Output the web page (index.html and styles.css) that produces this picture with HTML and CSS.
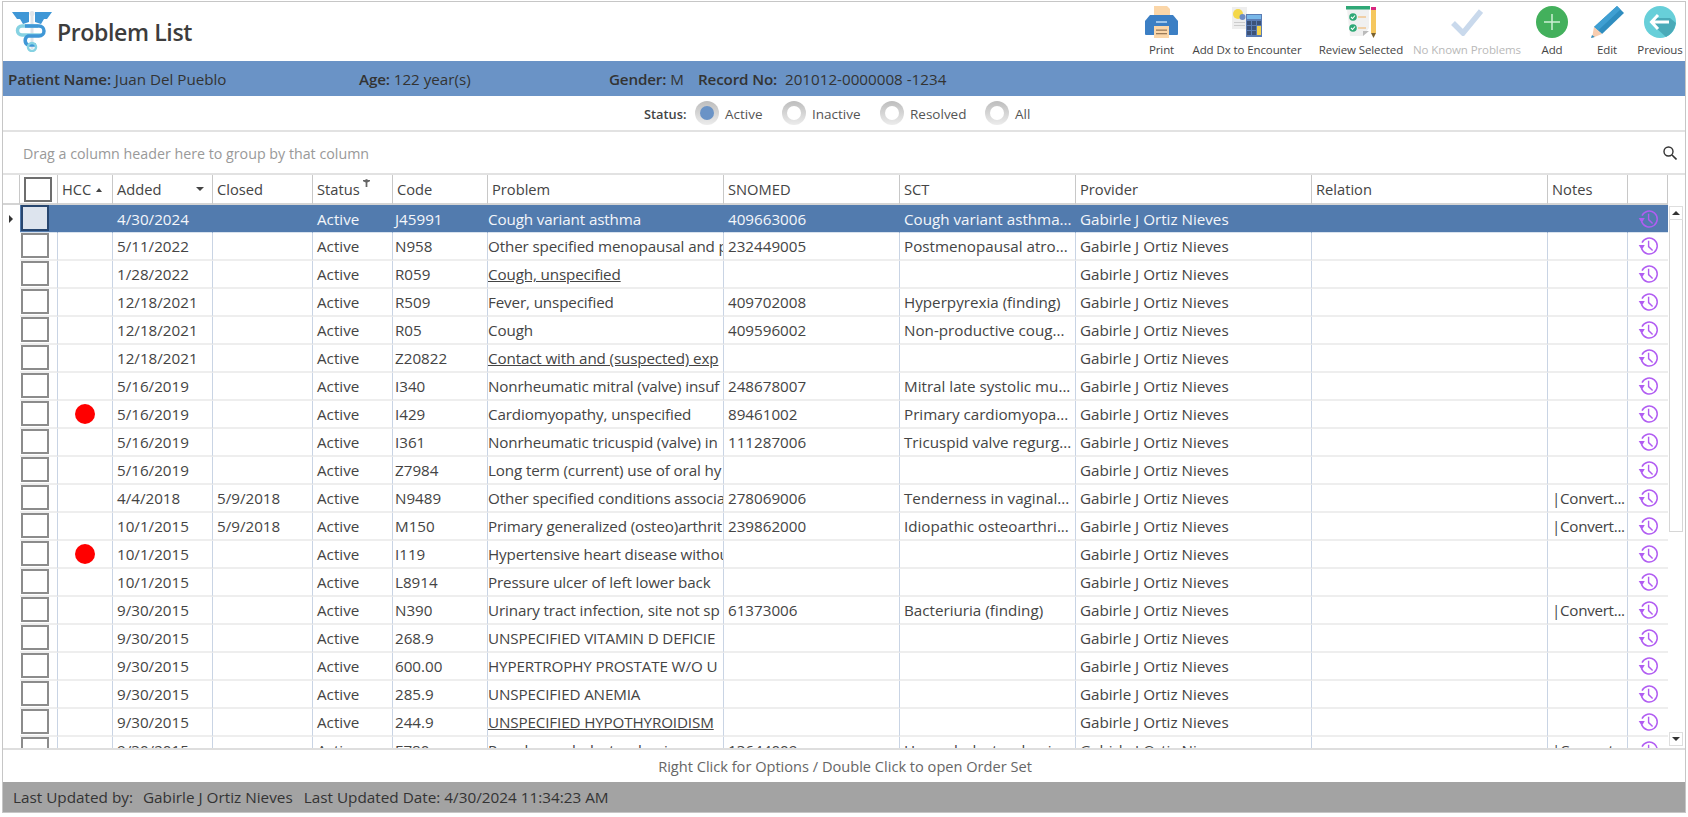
FILE: index.html
```html
<!DOCTYPE html>
<html lang="en">
<head>
<meta charset="utf-8">
<title>Problem List</title>
<link rel="stylesheet" href="styles.css">
</head>
<body>
<svg class="defs" aria-hidden="true">
  <symbol id="hist" viewBox="0 0 20 20">
    <path d="M3.2 12.6A8 8 0 1 0 3.4 6.2" transform="translate(.6 .4)" fill="none" stroke="currentColor" stroke-width="1.5"/>
    <path d="M1 8.6 L7 9.4 L3.4 14 Z" fill="currentColor" transform="rotate(-8 4 11)"/>
    <path d="M10.6 4.8V10.6L14.6 14.4" fill="none" stroke="currentColor" stroke-width="1.4"/>
  </symbol>
</svg>
<div class="frame">
  <header class="top">
    <svg class="logo" viewBox="0 0 40 41">
      <path d="M0 1H17V11L11 13 8 8 5 8Z" fill="#3f97d6"/>
      <path d="M40 1H23V11L29 13 32 8 35 8Z" fill="#3f97d6"/>
      <rect x="18.5" y="2" width="3" height="36" fill="#dfe5ea"/>
      <circle cx="20" cy="2.5" r="2.5" fill="#dfe5ea"/>
      <path d="M26 14H10a4 4 0 0 0 0 9H30" fill="none" stroke="#86d2e2" stroke-width="3.5" transform="translate(0 1)"/>
      <path d="M13 15H27a5 5 0 0 1 0 10H16a5 5 0 0 0 0 9H24" fill="none" stroke="#3f97d6" stroke-width="3.5"/>
      <circle cx="20" cy="36" r="4" fill="none" stroke="#86d2e2" stroke-width="2.5"/>
    </svg>
    <h1 class="title">Problem List</h1>
    <nav class="tools">
      <div class="tool t-print">
        <svg class="ticon" viewBox="0 0 33 32"><path d="M9 0H22L25 3V12H9Z" fill="#fbd6a8"/><path d="M5 9H28L33 15V28Q33 29 32 29H1Q0 29 0 28V15Z" fill="#3c7fc4"/><rect x="11" y="15" width="11" height="2" fill="#9cc4ea"/><rect x="9" y="20" width="15" height="12" fill="#fbd6a8"/><rect x="11" y="23.500" width="11" height="1.300" fill="#9b7a58"/><rect x="11" y="27" width="11" height="1.300" fill="#9b7a58"/></svg>
        <span class="tlabel">Print</span>
      </div>
      <div class="tool t-dx">
        <svg class="ticon" viewBox="0 0 30 30"><rect width="15" height="22" fill="#eeeeee"/><circle cx="6" cy="7" r="5" fill="#f4d84a"/><circle cx="10.500" cy="10" r="3" fill="#6d8cc4"/><rect x="2" y="15" width="11" height="1" fill="#ccc"/><rect x="2" y="18" width="11" height="1" fill="#ccc"/><rect x="14" y="7" width="16" height="23" fill="#5b7cb4"/><rect x="15" y="8" width="14" height="4" fill="#78b7e8"/><g fill="#3d5278"><rect x="15" y="14" width="4" height="4"/><rect x="20" y="14" width="4" height="4"/><rect x="25" y="14" width="4" height="4"/><rect x="15" y="19" width="4" height="4"/><rect x="20" y="19" width="4" height="4"/><rect x="15" y="24" width="4" height="4"/><rect x="20" y="24" width="4" height="4"/></g><rect x="25" y="19" width="4" height="9" fill="#f5d24a"/></svg>
        <span class="tlabel">Add Dx to Encounter</span>
      </div>
      <div class="tool t-review">
        <svg class="ticon" viewBox="0 0 30 32"><path d="M1 3H23V22L17 30H4Z" fill="#f0f0f0"/><path d="M17 30V25H23Z" fill="#bbbbbb"/><rect width="24" height="3.500" fill="#2fa876"/><circle cx="7" cy="11" r="3.800" fill="#2fa876"/><circle cx="7" cy="22" r="3.800" fill="#2fa876"/><path d="M5 11L6.500 12.500 9 9.500M5 22L6.500 23.500 9 20.500" fill="none" stroke="#fff" stroke-width="1.100"/><path d="M12 11H20M12 22H20" stroke="#f0b060" stroke-width="1.100"/><rect x="25" y="1" width="5" height="3" fill="#d9277f"/><rect x="25" y="4" width="5" height="23" fill="#f5c75e"/><path d="M25 27H30L27.500 32Z" fill="#7a6230"/></svg>
        <span class="tlabel">Review Selected</span>
      </div>
      <div class="tool t-nk">
        <svg class="ticon" viewBox="0 0 32 28"><path d="M2 15L12 25 30 3" fill="none" stroke="#c9d9ec" stroke-width="5.500"/></svg>
        <span class="tlabel muted">No Known Problems</span>
      </div>
      <div class="tool t-add">
        <svg class="ticon" viewBox="0 0 32 32"><circle cx="16" cy="16" r="16" fill="#43b05c"/><path d="M16 8V24M8 16H24" stroke="#cdeed4" stroke-width="1.500"/></svg>
        <span class="tlabel">Add</span>
      </div>
      <div class="tool t-edit">
        <svg class="ticon" viewBox="0 0 33 32"><path d="M26 0L33 7 11 28 3 21Z" fill="#2f8dbf"/><path d="M26 0L29.500 3.500 7 24.500 3 21Z" fill="#3f9fd2"/><path d="M3 21L11 28 1 32Z" fill="#f7cdb0"/><path d="M1 29L3.800 31 0 32Z" fill="#2f8dbf"/></svg>
        <span class="tlabel">Edit</span>
      </div>
      <div class="tool t-prev">
        <svg class="ticon" viewBox="0 0 32 32"><circle cx="16" cy="16" r="16" fill="#67cfd9"/><path d="M11 21L22 31Q30 27 32 17L26 12 H10Z" fill="#4aaab8"/><path d="M14 9L7.500 16 14 23M8 16H25" fill="none" stroke="#fff" stroke-width="3"/></svg>
        <span class="tlabel">Previous</span>
      </div>
    </nav>
  </header>

  <section class="patient">
    <span class="pf pf-name"><b>Patient Name:</b> Juan Del Pueblo</span>
    <span class="pf pf-age"><b>Age:</b> 122 year(s)</span>
    <span class="pf pf-gender"><b>Gender:</b> M</span>
    <span class="pf"><b>Record No:</b> <span class="recno">201012-0000008 -1234</span></span>
  </section>

  <section class="filter">
    <b class="flabel">Status:</b>
    <span class="radio on"></span><span class="rtext r1">Active</span>
    <span class="radio"></span><span class="rtext r2">Inactive</span>
    <span class="radio"></span><span class="rtext r3">Resolved</span>
    <span class="radio"></span><span class="rtext">All</span>
  </section>

  <section class="group">
    <span>Drag a column header here to group by that column</span>
    <svg class="search" viewBox="0 0 14 14"><circle cx="5.500" cy="5.500" r="4.500" fill="none" stroke="#333" stroke-width="1.400"/><path d="M9 9L13.500 13.500" stroke="#333" stroke-width="1.600"/></svg>
  </section>

  <section class="grid">
    <div class="view">
      <table class="tbl">
        <colgroup>
          <col class="c-ind"><col class="c-chk"><col class="c-hcc"><col class="c-add"><col class="c-cls"><col class="c-st"><col class="c-code"><col class="c-prob"><col class="c-sno"><col class="c-sct"><col class="c-prov"><col class="c-rel"><col class="c-note"><col class="c-act">
        </colgroup>
        <thead>
          <tr>
            <th class="ind"></th>
            <th class="nopad"><span class="box hbox"></span></th>
            <th>HCC<i class="tri up"></i></th>
            <th><span class="spread">Added<i class="tri down"></i></span></th>
            <th>Closed</th>
            <th>Status<svg class="funnel" viewBox="0 0 8 9"><circle cx="4" cy="1.500" r="1.500" fill="#777"/><path d="M0 1H8V2.500L5 4V9H3V4L0 2.500Z" fill="#666"/></svg></th>
            <th>Code</th>
            <th>Problem</th>
            <th>SNOMED</th>
            <th>SCT</th>
            <th>Provider</th>
            <th>Relation</th>
            <th>Notes</th>
            <th></th>
          </tr>
        </thead>
        <tbody>
          <tr class="sel"><td class="ind"><i class="tri right"></i></td><td class="nopad"><span class="box"></span></td><td></td><td>4/30/2024</td><td></td><td>Active</td><td class="code">J45991</td><td class="prob">Cough variant asthma</td><td>409663006</td><td>Cough variant asthma...</td><td>Gabirle J Ortiz Nieves</td><td></td><td></td><td class="act"><svg class="hist"><use href="#hist"/></svg></td></tr>
          <tr><td class="ind"></td><td class="nopad"><span class="box"></span></td><td></td><td>5/11/2022</td><td></td><td>Active</td><td class="code">N958</td><td class="prob">Other specified menopausal and p</td><td>232449005</td><td>Postmenopausal atro...</td><td>Gabirle J Ortiz Nieves</td><td></td><td></td><td class="act"><svg class="hist"><use href="#hist"/></svg></td></tr>
          <tr><td class="ind"></td><td class="nopad"><span class="box"></span></td><td></td><td>1/28/2022</td><td></td><td>Active</td><td class="code">R059</td><td class="prob"><u>Cough, unspecified</u></td><td></td><td></td><td>Gabirle J Ortiz Nieves</td><td></td><td></td><td class="act"><svg class="hist"><use href="#hist"/></svg></td></tr>
          <tr><td class="ind"></td><td class="nopad"><span class="box"></span></td><td></td><td>12/18/2021</td><td></td><td>Active</td><td class="code">R509</td><td class="prob">Fever, unspecified</td><td>409702008</td><td>Hyperpyrexia (finding)</td><td>Gabirle J Ortiz Nieves</td><td></td><td></td><td class="act"><svg class="hist"><use href="#hist"/></svg></td></tr>
          <tr><td class="ind"></td><td class="nopad"><span class="box"></span></td><td></td><td>12/18/2021</td><td></td><td>Active</td><td class="code">R05</td><td class="prob">Cough</td><td>409596002</td><td>Non-productive coug...</td><td>Gabirle J Ortiz Nieves</td><td></td><td></td><td class="act"><svg class="hist"><use href="#hist"/></svg></td></tr>
          <tr><td class="ind"></td><td class="nopad"><span class="box"></span></td><td></td><td>12/18/2021</td><td></td><td>Active</td><td class="code">Z20822</td><td class="prob"><u>Contact with and (suspected) exp</u></td><td></td><td></td><td>Gabirle J Ortiz Nieves</td><td></td><td></td><td class="act"><svg class="hist"><use href="#hist"/></svg></td></tr>
          <tr><td class="ind"></td><td class="nopad"><span class="box"></span></td><td></td><td>5/16/2019</td><td></td><td>Active</td><td class="code">I340</td><td class="prob">Nonrheumatic mitral (valve) insuf</td><td>248678007</td><td>Mitral late systolic mu...</td><td>Gabirle J Ortiz Nieves</td><td></td><td></td><td class="act"><svg class="hist"><use href="#hist"/></svg></td></tr>
          <tr><td class="ind"></td><td class="nopad"><span class="box"></span></td><td class="dotcell"><span class="dot"></span></td><td>5/16/2019</td><td></td><td>Active</td><td class="code">I429</td><td class="prob">Cardiomyopathy, unspecified</td><td>89461002</td><td>Primary cardiomyopa...</td><td>Gabirle J Ortiz Nieves</td><td></td><td></td><td class="act"><svg class="hist"><use href="#hist"/></svg></td></tr>
          <tr><td class="ind"></td><td class="nopad"><span class="box"></span></td><td></td><td>5/16/2019</td><td></td><td>Active</td><td class="code">I361</td><td class="prob">Nonrheumatic tricuspid (valve) in</td><td>111287006</td><td>Tricuspid valve regurg...</td><td>Gabirle J Ortiz Nieves</td><td></td><td></td><td class="act"><svg class="hist"><use href="#hist"/></svg></td></tr>
          <tr><td class="ind"></td><td class="nopad"><span class="box"></span></td><td></td><td>5/16/2019</td><td></td><td>Active</td><td class="code">Z7984</td><td class="prob">Long term (current) use of oral hy</td><td></td><td></td><td>Gabirle J Ortiz Nieves</td><td></td><td></td><td class="act"><svg class="hist"><use href="#hist"/></svg></td></tr>
          <tr><td class="ind"></td><td class="nopad"><span class="box"></span></td><td></td><td>4/4/2018</td><td>5/9/2018</td><td>Active</td><td class="code">N9489</td><td class="prob">Other specified conditions associa</td><td>278069006</td><td>Tenderness in vaginal...</td><td>Gabirle J Ortiz Nieves</td><td></td><td class="note">|Convert...</td><td class="act"><svg class="hist"><use href="#hist"/></svg></td></tr>
          <tr><td class="ind"></td><td class="nopad"><span class="box"></span></td><td></td><td>10/1/2015</td><td>5/9/2018</td><td>Active</td><td class="code">M150</td><td class="prob">Primary generalized (osteo)arthrit</td><td>239862000</td><td>Idiopathic osteoarthri...</td><td>Gabirle J Ortiz Nieves</td><td></td><td class="note">|Convert...</td><td class="act"><svg class="hist"><use href="#hist"/></svg></td></tr>
          <tr><td class="ind"></td><td class="nopad"><span class="box"></span></td><td class="dotcell"><span class="dot"></span></td><td>10/1/2015</td><td></td><td>Active</td><td class="code">I119</td><td class="prob">Hypertensive heart disease withou</td><td></td><td></td><td>Gabirle J Ortiz Nieves</td><td></td><td></td><td class="act"><svg class="hist"><use href="#hist"/></svg></td></tr>
          <tr><td class="ind"></td><td class="nopad"><span class="box"></span></td><td></td><td>10/1/2015</td><td></td><td>Active</td><td class="code">L8914</td><td class="prob">Pressure ulcer of left lower back</td><td></td><td></td><td>Gabirle J Ortiz Nieves</td><td></td><td></td><td class="act"><svg class="hist"><use href="#hist"/></svg></td></tr>
          <tr><td class="ind"></td><td class="nopad"><span class="box"></span></td><td></td><td>9/30/2015</td><td></td><td>Active</td><td class="code">N390</td><td class="prob">Urinary tract infection, site not sp</td><td>61373006</td><td>Bacteriuria (finding)</td><td>Gabirle J Ortiz Nieves</td><td></td><td class="note">|Convert...</td><td class="act"><svg class="hist"><use href="#hist"/></svg></td></tr>
          <tr><td class="ind"></td><td class="nopad"><span class="box"></span></td><td></td><td>9/30/2015</td><td></td><td>Active</td><td class="code">268.9</td><td class="prob">UNSPECIFIED VITAMIN D DEFICIE</td><td></td><td></td><td>Gabirle J Ortiz Nieves</td><td></td><td></td><td class="act"><svg class="hist"><use href="#hist"/></svg></td></tr>
          <tr><td class="ind"></td><td class="nopad"><span class="box"></span></td><td></td><td>9/30/2015</td><td></td><td>Active</td><td class="code">600.00</td><td class="prob">HYPERTROPHY PROSTATE W/O U</td><td></td><td></td><td>Gabirle J Ortiz Nieves</td><td></td><td></td><td class="act"><svg class="hist"><use href="#hist"/></svg></td></tr>
          <tr><td class="ind"></td><td class="nopad"><span class="box"></span></td><td></td><td>9/30/2015</td><td></td><td>Active</td><td class="code">285.9</td><td class="prob">UNSPECIFIED ANEMIA</td><td></td><td></td><td>Gabirle J Ortiz Nieves</td><td></td><td></td><td class="act"><svg class="hist"><use href="#hist"/></svg></td></tr>
          <tr><td class="ind"></td><td class="nopad"><span class="box"></span></td><td></td><td>9/30/2015</td><td></td><td>Active</td><td class="code">244.9</td><td class="prob"><u>UNSPECIFIED HYPOTHYROIDISM</u></td><td></td><td></td><td>Gabirle J Ortiz Nieves</td><td></td><td></td><td class="act"><svg class="hist"><use href="#hist"/></svg></td></tr>
          <tr><td class="ind"></td><td class="nopad"><span class="box"></span></td><td></td><td>9/30/2015</td><td></td><td>Active</td><td class="code">E780</td><td class="prob">Pure hypercholesterolemia</td><td>13644009</td><td>Hypercholesterolemi...</td><td>Gabirle J Ortiz Nieves</td><td></td><td class="note">|Convert...</td><td class="act"><svg class="hist"><use href="#hist"/></svg></td></tr>
        </tbody>
      </table>
    </div>
    <div class="scroll">
      <div class="sbtn"><i class="tri sup"></i></div>
      <div class="thumb"></div>
      <div class="sbtn end"><i class="tri sdown"></i></div>
    </div>
  </section>

  <div class="hint">Right Click for Options / Double Click to open Order Set</div>
  <footer class="status">
    <span class="sby">Last Updated by:</span>
    <span class="sname">Gabirle J Ortiz Nieves</span>
    <span>Last Updated Date: 4/30/2024 11:34:23 AM</span>
  </footer>
</div>
</body>
</html>
```

FILE: styles.css
```css
* { box-sizing: border-box; }
html, body { margin: 0; padding: 0; height: 100%; background: #fff; overflow: hidden; }
body { font-family: "Open Sans", "Noto Sans", sans-serif; font-size: 15.200px; color: #444; }
.defs { width: 0; height: 0; display: block; }

.frame {
  height: 812px;
  margin: 1px 2px 0 2px;
  border: 1px solid #c6c6c6;
  display: flex;
  flex-direction: column;
}

.top { height: 59px; flex: none; display: flex; align-items: flex-start; padding-left: 9px; }
.logo { width: 40px; height: 41px; margin-top: 9px; flex: none; }
.title { margin: 14px 0 0 5px; font-size: 23.100px; line-height: 33px; font-weight: 600; color: #3d3d3d; letter-spacing: -0.4px; }

.tools { margin-left: auto; display: flex; }
.tool { display: flex; flex-direction: column; align-items: center; height: 59px; }
.ticon { display: block; margin-top: 4px; height: 32px; flex: none; }
.tlabel { font-size: 11.500px; line-height: 16px; margin-top: 4px; color: #444; white-space: nowrap; letter-spacing: -0.1px; }
.muted { color: #b9b9b9; }
.t-print { width: 43px; }
.t-print .ticon { width: 33px; }
.t-dx { width: 128px; }
.t-dx .ticon { width: 30px; height: 30px; margin-top: 5px; margin-bottom: 1px; }
.t-review { width: 100px; }
.t-review .ticon { width: 30px; }
.t-nk { width: 112px; }
.t-nk .ticon { width: 32px; height: 28px; margin-top: 6px; margin-bottom: 2px; }
.t-add { width: 58px; }
.t-add .ticon { width: 32px; }
.t-edit { width: 52px; }
.t-edit .ticon { width: 33px; }
.t-prev { width: 50px; margin-left: 2px; }
.t-prev .ticon { width: 32px; }

.patient { height: 35px; flex: none; background: #6a93c6; display: flex; align-items: center; padding: 1px 0 0 5px; color: #333; white-space: nowrap; }
.patient b, .flabel { font-weight: 600; }
.patient b { letter-spacing: -0.15px; }
.pf-name { width: 351px; }
.pf-age { width: 250px; }
.pf-gender { width: 89px; }
.recno { margin-left: 4px; }

.filter { height: 34px; flex: none; display: flex; align-items: center; padding-left: 641px; font-size: 13.500px; }
.flabel { width: 51px; font-size: 12.800px; color: #444; padding-top: 2px; }
.radio { width: 24px; height: 24px; border-radius: 50%; background: linear-gradient(#bdbdbd, #ececec); display: flex; align-items: center; justify-content: center; flex: none; }
.radio::after { content: ""; width: 14px; height: 14px; border-radius: 50%; background: #fff; }
.radio.on::after { background: #6a93c6; }
.rtext { margin-left: 6px; color: #555; padding-top: 2px; }
.r1 { width: 57px; }
.r2 { width: 68px; }
.r3 { width: 75px; }

.group { height: 45px; flex: none; border-top: 2px solid #e2e2e2; border-bottom: 2px solid #e2e2e2; display: flex; align-items: center; justify-content: space-between; padding: 1px 8px 0 20px; color: #999; font-size: 14.250px; }
.search { width: 14px; height: 14px; }

.grid { flex: 1; min-height: 0; display: flex; overflow: hidden; }
.view { width: 1665px; flex: none; overflow: hidden; }
.tbl { table-layout: fixed; border-collapse: separate; border-spacing: 0; width: 1665px; }
.c-ind { width: 17px; }
.c-chk { width: 38px; }
.c-hcc { width: 55px; }
.c-add { width: 100px; }
.c-cls { width: 100px; }
.c-st { width: 80px; }
.c-code { width: 95px; }
.c-prob { width: 236px; }
.c-sno { width: 176px; }
.c-sct { width: 176px; }
.c-prov { width: 236px; }
.c-rel { width: 236px; }
.c-note { width: 80px; }
.c-act { width: 40px; }

th { height: 30px; padding: 0 5px 0 4px; font-weight: 400; font-size: 14.700px; text-align: left; color: #444; white-space: nowrap; border-right: 1px solid #c8c8c8; border-bottom: 2px solid #d4d4d4; position: relative; }
td { height: 28px; padding: 0 5px 0 4px; white-space: nowrap; overflow: hidden; border-right: 1px solid #c9d4e4; border-bottom: 2px solid #eeeeee; }
th.ind { padding: 0; border-right: 1px solid #c8c8c8; }
td.ind { padding: 0 0 0 6px; border-right: 0; border-bottom: 0; }
.nopad { padding: 0 0 0 1px; vertical-align: top; }
th.nopad { vertical-align: middle; }
td.code { padding-left: 2px; }
td.prob { padding-left: 0; padding-right: 0; letter-spacing: -0.13px; }
td.note { letter-spacing: -0.3px; padding-right: 0; }
td.act { padding: 0 0 0 10px; border-right: 0; }
td.dotcell { padding: 0 0 0 17px; }

.box { display: block; width: 28px; height: 25px; border: 2px solid #8c8c8c; background: #fff; }
.hbox { margin-left: 3px; height: 25px; border-color: #6e6e6e; }
.sel td:not(.ind) { background: #527bae; color: #f4f6fa; border-color: #d8e2ee; border-right-color: #527bae; }
.sel td:not(.ind) { border-bottom: 1px solid #d8e2ee; }
.sel .box { background: #dde4ee; border-color: #27466f; height: 26px; }
.dot { display: block; width: 20px; height: 20px; border-radius: 50%; background: #ff0000; }
.hist { display: block; width: 20px; height: 20px; color: #b15df2; }

.tri { display: inline-block; width: 0; height: 0; border-style: solid; border-color: transparent; }
.tri.up { border-width: 0 3.500px 4px; border-bottom-color: #444; margin-left: 5px; vertical-align: 3px; }
.tri.down { border-width: 4px 4px 0; border-top-color: #444; }
.tri.right { border-width: 4px 0 4px 4px; border-left-color: #333; display: block; }
.spread { display: flex; align-items: center; justify-content: space-between; padding-right: 3px; }
.funnel { position: absolute; left: 50px; top: 4px; width: 7px; height: 8px; }

.scroll { width: 17px; flex: none; display: flex; flex-direction: column; padding: 31px 2px 2px 1px; }
.sbtn { height: 14px; flex: none; border: 1px solid #dedede; display: flex; align-items: center; justify-content: center; }
.sbtn.end { margin-top: auto; }
.tri.sup { border-width: 0 4px 4px; border-bottom-color: #333; }
.tri.sdown { border-width: 4px 4px 0; border-top-color: #333; }
.thumb { height: 312px; flex: none; border: 1px solid #d6d6d6; border-top: 0; }

.hint { height: 34px; flex: none; border-top: 2px solid #dedede; display: flex; align-items: center; justify-content: center; color: #666; font-size: 14.600px; padding-left: 2px; }
.status { height: 30px; flex: none; background: #a3a3a3; display: flex; align-items: center; padding-left: 10px; color: #333; white-space: nowrap; font-size: 15.300px; }
.sname { margin-left: 10px; margin-right: 11px; }
```
